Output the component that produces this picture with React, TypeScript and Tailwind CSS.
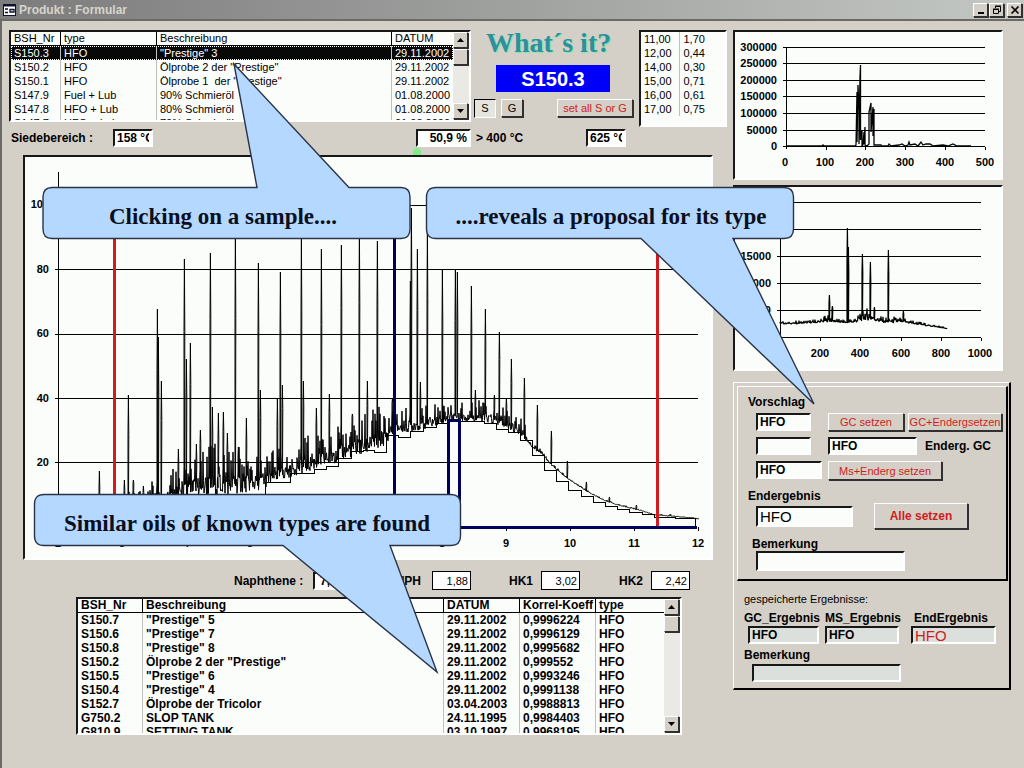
import type { ReactNode } from "react";
import clsx from "clsx";

const SUNKEN = "border-2 border-t-[#181818] border-l-[#181818] border-r-white border-b-white";
const RAISED = "border border-t-white border-l-white border-r-[#303030] border-b-[#303030] shadow-[1px_1px_0_#303030]";
const INK = "#000000";

type Point = [number, number];

const samples = [
  ["S150.3", "HFO", '"Prestige" 3', "29.11.2002"],
  ["S150.2", "HFO", 'Ölprobe 2 der "Prestige"', "29.11.2002"],
  ["S150.1", "HFO", 'Ölprobe 1  der "Prestige"', "29.11.2002"],
  ["S147.9", "Fuel + Lub", "90% Schmieröl", "01.08.2000"],
  ["S147.8", "HFO + Lub", "80% Schmieröl", "01.08.2000"],
  ["S147.7", "HFO + Lub", "70% Schmieröl", "01.08.2000"],
];

const matches = [
  ["S150.7", '"Prestige" 5', "29.11.2002", "0,9996224", "HFO"],
  ["S150.6", '"Prestige" 7', "29.11.2002", "0,9996129", "HFO"],
  ["S150.8", '"Prestige" 8', "29.11.2002", "0,9995682", "HFO"],
  ["S150.2", 'Ölprobe 2 der "Prestige"', "29.11.2002", "0,999552", "HFO"],
  ["S150.5", '"Prestige" 6', "29.11.2002", "0,9993246", "HFO"],
  ["S150.4", '"Prestige" 4', "29.11.2002", "0,9991138", "HFO"],
  ["S152.7", "Ölprobe der Tricolor", "03.04.2003", "0,9988813", "HFO"],
  ["G750.2", "SLOP TANK", "24.11.1995", "0,9984403", "HFO"],
  ["G810.9", "SETTING TANK", "03.10.1997", "0,9968195", "HFO"],
];

const ratios = [
  ["11,00", "1,70"],
  ["12,00", "0,44"],
  ["14,00", "0,30"],
  ["15,00", "0,71"],
  ["16,00", "0,61"],
  ["17,00", "0,75"],
];

// ——— Chromatogram data, in plot pixels ———
// [start of the step, level]
const steps: Point[] = [
  [75, 352], [130, 345], [180, 340], [204, 337], [240, 325], [265, 316], [289, 312], [301, 309],
  [313, 301], [326, 294], [338, 293], [349, 295], [361, 278], [373, 280], [385, 274], [398, 270],
  [411, 266], [422, 263], [435, 264], [459, 266], [471, 272], [483, 275], [495, 283], [507, 298],
  [519, 313], [531, 324], [543, 333], [556, 339], [568, 345], [580, 349], [592, 352], [604, 355],
  [617, 357], [629, 360], [650, 361], [670, 362],
];

const baseline: Point[] = [
  [33, 368], [70, 366], [95, 354], [130, 348], [180, 340], [204, 338], [235, 333], [252, 325],
  [277, 316], [301, 310], [320, 302], [345, 296], [361, 288], [366, 278], [400, 272], [425, 264],
  [459, 265], [480, 271], [498, 280], [508, 292], [516, 297], [527, 309], [540, 320], [556, 331],
  [568, 338], [580, 344], [592, 348], [604, 351], [617, 354], [629, 358], [655, 360], [674, 362],
];

const noise: Point[] = [
  [33, 1], [80, 4], [95, 16], [140, 28], [165, 46], [185, 60], [205, 54], [225, 40], [240, 36],
  [265, 32], [290, 38], [320, 38], [355, 44], [368, 26], [420, 22], [460, 22], [485, 22], [500, 16],
  [508, 8], [520, 4], [540, 2], [674, 1],
];

// [x, top]
const peaks: Point[] = [
  [74, 314], [99, 323], [103, 238], [108, 323], [118, 329], [132, 152], [133, 180], [136, 224],
  [153, 292], [159, 102], [161, 202], [165, 186], [171, 287], [175, 273], [185, 96], [187, 250],
  [193, 256], [198, 255], [202, 276], [210, 72], [213, 290], [221, 261], [233, 106], [235, 233],
  [252, 242], [255, 115], [257, 228], [276, 82], [278, 224], [291, 251], [296, 92], [304, 237],
  [316, 88], [327, 257], [334, 72], [342, 224], [352, 84], [367, 242], [385, 124], [386, 51],
  [392, 92], [395, 225], [402, 74], [417, 112], [430, 113], [432, 115], [446, 129], [450, 233],
  [460, 152], [469, 238], [474, 175], [481, 242], [486, 202], [499, 221], [512, 248], [526, 274],
  [542, 304], [561, 325], [584, 340], [611, 348], [645, 357],
];

function interpolate(points: Point[], x: number) {
  for (let i = 1; i < points.length; i++) {
    const [x0, y0] = points[i - 1];
    const [x1, y1] = points[i];
    if (x <= x1) return y0 + ((y1 - y0) * (x - x0)) / (x1 - x0);
  }
  return points[points.length - 1][1];
}

function rand(n: number) {
  const v = Math.sin(n * 12.9898) * 43758.5453;
  return v - Math.floor(v);
}

// noisy base with a narrow spike at every peak
function tracePath(base: Point[], amp: Point[], tops: Point[]) {
  const start = base[0][0];
  const end = base[base.length - 1][0];
  let d = "";
  for (let i = start * 2; i <= end * 2; i++) {
    const x = i / 2;
    const r = rand(i);
    const y = interpolate(base, x) - (i % 2 === 0 ? r ** 1.6 : r * 0.4) * interpolate(amp, x);
    d += `${d ? "L" : "M"}${x} ${y.toFixed(1)}`;
    const peak = tops.find((p) => p[0] === x);
    if (peak) {
      const shoulder = (peak[1] + (y - peak[1]) * 0.35).toFixed(1);
      d += `V${shoulder}L${x + 0.4} ${peak[1]}L${x + 0.8} ${shoulder}`;
    }
  }
  return d;
}

function stepPath() {
  let d = `M${steps[0][0]} ${steps[0][1]}`;
  for (let i = 1; i < steps.length; i++) {
    d += `H${steps[i][0]}V${steps[i][1]}`;
  }
  return d + "V370";
}

function AxisText({ x, y, end, children }: { x: number; y: number; end?: boolean; children: ReactNode }) {
  return (
    <text x={x} y={y} textAnchor={end ? "end" : "middle"} className="fill-black text-[11px] font-bold">
      {children}
    </text>
  );
}

function Chromatogram() {
  return (
    <svg viewBox="0 0 686 401" className="block h-full w-full" role="img" aria-label="GC chromatogram">
      <g stroke={INK} shapeRendering="crispEdges">
        {[48, 112, 177, 241, 305].map((y) => (
          <line key={y} x1="30" x2="673" y1={y + 0.5} y2={y + 0.5} />
        ))}
        <line x1="33.5" x2="33.5" y1="15" y2="373" />
        {[97, 161, 225, 289, 353, 417, 481, 545, 609, 673].map((x) => (
          <line key={x} x1={x + 0.5} x2={x + 0.5} y1="370" y2="374" />
        ))}
      </g>
      {[100, 80, 60, 40, 20].map((v, i) => (
        <AxisText key={v} x={24} y={[51, 116, 180, 245, 309][i]} end>
          {v}
        </AxisText>
      ))}
      {[2, 3, 4, 5, 6, 7, 8, 9, 10, 11, 12].map((v, i) => (
        <AxisText key={v} x={33 + i * 64} y={390}>
          {v}
        </AxisText>
      ))}
      <path d={stepPath()} fill="none" stroke={INK} shapeRendering="crispEdges" />
      <path d={tracePath(baseline, noise, peaks)} fill="none" stroke={INK} strokeLinejoin="bevel" />
      <g fill="none" stroke="#000058" strokeWidth="3" shapeRendering="crispEdges">
        <path d="M369.5 40V370" />
        <path d="M423.5 370V263.5H434.5V370" />
        <path d="M33 370.5H672" />
      </g>
      <g stroke="#d01c20" strokeWidth="3" shapeRendering="crispEdges">
        <path d="M89.5 48V370" />
        <path d="M632.5 48V369" />
      </g>
    </svg>
  );
}

function AlkaneChart() {
  return (
    <svg viewBox="0 0 266 146" className="block h-full w-full" role="img" aria-label="MS trace 1">
      <g stroke={INK} shapeRendering="crispEdges">
        {[15, 31, 48, 64, 81, 98, 114].map((y) => (
          <line key={y} x1="48" x2="250" y1={y + 0.5} y2={y + 0.5} />
        ))}
        <line x1="51.5" x2="51.5" y1="15" y2="117" />
        {[91, 130, 170, 210, 250].map((x) => (
          <line key={x} x1={x + 0.5} x2={x + 0.5} y1="115" y2="118" />
        ))}
      </g>
      {[300000, 250000, 200000, 150000, 100000, 50000, 0].map((v, i) => (
        <AxisText key={v} x={42} y={[19, 35, 52, 68, 85, 102, 118][i]} end>
          {v}
        </AxisText>
      ))}
      {[0, 100, 200, 300, 400, 500].map((v, i) => (
        <AxisText key={v} x={50 + i * 40} y={134}>
          {v}
        </AxisText>
      ))}
      <path
        d="M51 114H87L88 113L89 114H120L121 113L122 60V110L123 53L124 79V112L125 45L125.500 33V108L127 98V114L128 113L129 100V112L130 95V113L132 114L134 112V80L136 71V100L138 75V104L139 77V113L146 113L147 114H153L154 112L156 114L164 113L167 112L170 114L173 113L174 110L175 113L180 112L183 114L186 110L188 113L191 112L195 112L198 114L208 113L213 114L218 112L222 114H236"
        fill="none"
        stroke={INK}
        strokeWidth="1.3"
      />
    </svg>
  );
}

const msBase: Point[] = [[45, 137], [60, 137], [80, 136], [92, 135], [110, 136], [121, 136], [130, 133], [137, 134], [150, 136], [170, 136], [185, 138], [200, 140], [212, 142]];
const msNoise: Point[] = [[45, 3], [85, 4], [95, 9], [103, 4], [111, 3], [118, 6], [124, 12], [134, 14], [148, 6], [158, 8], [172, 5], [190, 3], [212, 2]];
const msPeaks: Point[] = [[94, 108], [97, 119], [112, 41], [113, 60], [127, 67], [135, 75], [139, 120], [153, 63], [168, 124]];

function MsChart() {
  return (
    <svg viewBox="0 0 266 182" className="block h-full w-full" role="img" aria-label="MS trace 2">
      <g stroke={INK} shapeRendering="crispEdges">
        {[15, 42, 69, 96, 123, 150].map((y) => (
          <line key={y} x1="42" x2="246" y1={y + 0.5} y2={y + 0.5} />
        ))}
        <line x1="45.5" x2="45.5" y1="15" y2="153" />
        {[85, 125, 166, 206, 246].map((x) => (
          <line key={x} x1={x + 0.5} x2={x + 0.5} y1="151" y2="154" />
        ))}
      </g>
      {[15000, 10000, 5000].map((v, i) => (
        <AxisText key={v} x={36} y={73 + i * 27} end>
          {v}
        </AxisText>
      ))}
      {[200, 400, 600, 800, 1000].map((v, i) => (
        <AxisText key={v} x={[85, 125, 166, 206, 245][i]} y={170}>
          {v}
        </AxisText>
      ))}
      <path d={tracePath(msBase, msNoise, msPeaks)} fill="none" stroke={INK} strokeWidth="1.2" strokeLinejoin="bevel" />
    </svg>
  );
}

function ScrollBar() {
  return (
    <div className="flex w-4 shrink-0 flex-col bg-[#ebe9e4]">
      <button type="button" aria-label="Scroll up" className={clsx("flex h-4 w-[15px] items-center justify-center bg-[#d4d0c8]", RAISED)}>
        <svg viewBox="0 0 7 4" className="h-1 w-[7px]"><path d="M3.500 0L7 4H0Z" /></svg>
      </button>
      <div className={clsx("mt-px h-4 w-[15px] bg-[#d4d0c8]", RAISED)} />
      <button type="button" aria-label="Scroll down" className={clsx("mt-auto mb-px flex h-4 w-[15px] items-center justify-center bg-[#d4d0c8]", RAISED)}>
        <svg viewBox="0 0 7 4" className="h-1 w-[7px]"><path d="M0 0H7L3.500 4Z" /></svg>
      </button>
    </div>
  );
}

function ListTable({ heads, widths, rows, selected }: { heads: string[]; widths: string[]; rows: string[][]; selected?: number }) {
  return (
    <table className="w-full table-fixed border-separate border-spacing-0 text-left leading-[14px] whitespace-pre">
      <thead>
        <tr>
          {heads.map((head, i) => (
            <th
              key={head}
              className={clsx("border-b border-black p-0 pl-[3px] leading-[13px] [font-weight:inherit]", widths[i], i < heads.length - 1 && "border-r")}
            >
              {head}
            </th>
          ))}
        </tr>
      </thead>
      <tbody>
        {rows.map((row, r) => (
          <tr
            key={row[0]}
            className={clsx(r === selected && "bg-[#080808] text-white outline-1 -outline-offset-1 outline-dotted outline-white")}
          >
            {row.map((cell, i) => (
              <td
                key={i}
                className={clsx("p-0 pl-[3px]", i < row.length - 1 && "border-r border-[#c0c0c0]")}
              >
                {cell}
              </td>
            ))}
          </tr>
        ))}
      </tbody>
    </table>
  );
}

function Field({ id, label, value, className }: { id: string; label?: string; value: string; className: string }) {
  return (
    <input id={id} aria-label={label} defaultValue={value} className={clsx("min-w-0 shrink-0 px-[2px] outline-none", className)} />
  );
}

function PushButton({ className, children }: { className: string; children: ReactNode }) {
  return (
    <button type="button" className={clsx("shrink-0 bg-[#d4d0c8] whitespace-nowrap", RAISED, className)}>
      {children}
    </button>
  );
}

function Callout({ className, viewBox, path, x, y, children }: { className: string; viewBox: string; path: string; x: number; y: number; children: string }) {
  return (
    <svg viewBox={viewBox} className={clsx("pointer-events-none absolute", className)}>
      <path d={path} fill="#b4d8ff" stroke="#2b3447" strokeWidth="1.4" />
      <text x={x} y={y} textAnchor="middle" className="fill-[#0a0f1e] font-['Liberation_Serif',serif] text-[23px] font-bold">
        {children}
      </text>
    </svg>
  );
}

function TitleBar() {
  return (
    <header className="flex h-[19px] items-center bg-linear-to-r from-[#7c7c7c] to-[#c4c8c4] pr-[2px] pl-[3px]">
      <svg viewBox="0 0 13 12" className="h-3 w-[13px]">
        <rect x="0.5" y="0.5" width="12" height="11" fill="#fff" stroke="#101030" />
        <path d="M1 1.500H12" stroke="#101030" strokeWidth="2" />
        <path d="M2 5H5M2 8.500H5M7 5.500H11V8H7Z" stroke="#101030" strokeWidth="1.3" fill="none" />
      </svg>
      <h1 className="ml-[3px] text-[12px] font-bold text-[#d8d4cc]">Produkt : Formular</h1>
      <div className="ml-auto flex">
        <PushButton className="flex h-[14px] w-[15px] items-center justify-center">
          <svg viewBox="0 0 10 10" className="size-[10px]" aria-label="Minimize"><path d="M2 8H8" stroke="#000" strokeWidth="2" /></svg>
        </PushButton>
        <PushButton className="ml-px flex h-[14px] w-[15px] items-center justify-center">
          <svg viewBox="0 0 10 10" className="size-[10px]" aria-label="Restore">
            <path d="M3.500 3V1.500H8.500V6.500H7M1.500 4.500H6.500V8.500H1.500ZM3 1H9M1 4H7" stroke="#000" fill="none" />
          </svg>
        </PushButton>
        <PushButton className="ml-[3px] flex h-[14px] w-[15px] items-center justify-center">
          <svg viewBox="0 0 10 10" className="size-[10px]" aria-label="Close"><path d="M1.500 1.500L8.500 8.500M8.500 1.500L1.500 8.500" stroke="#000" strokeWidth="1.6" /></svg>
        </PushButton>
      </div>
    </header>
  );
}

function SampleHeader() {
  return (
    <div className="flex h-[97px] items-start">
      <div className={clsx("flex h-[92px] min-w-0 flex-1 overflow-hidden bg-[#fbfdfb]", SUNKEN)}>
        <div className="min-w-0 flex-1">
          <ListTable
            heads={["BSH_Nr", "type", "Beschreibung", "DATUM"]}
            widths={["w-[50px]", "w-24", "", "w-[61px]"]}
            rows={samples}
            selected={0}
          />
        </div>
        <ScrollBar />
      </div>

      <div className="flex w-[168px] shrink-0 flex-col">
        <p className="h-[35px] pl-[15px] font-['Liberation_Serif',serif] text-[28px] leading-[26px] font-bold text-[#2f8f9f] [text-shadow:1px_1px_0_#86e8a8]">
          What´s it?
        </p>
        <div className="ml-[25px] flex h-[27px] w-[114px] items-center justify-center bg-[#0000fa] text-[20px] font-bold text-white">
          S150.3
        </div>
        <div className="mt-[7px] flex pl-[3px]">
          <button type="button" aria-pressed="true" className="h-[19px] w-[22px] border border-t-black border-l-black border-r-white border-b-white bg-[#e6e4df]">
            S
          </button>
          <PushButton className="ml-[5px] h-[18px] w-[22px]">G</PushButton>
          <PushButton className="ml-[34px] h-[18px] w-[76px] text-[#d01c20]">set all S or G</PushButton>
        </div>
      </div>

      <div className={clsx("h-[97px] w-[88px] shrink-0 bg-[#fbfdfb]", SUNKEN)}>
        <table className="border-collapse leading-[14px]">
          <tbody>
            {ratios.map(([mass, ratio]) => (
              <tr key={mass}>
                <td className="w-[38px] border-r border-[#c0c0c0] p-0 pl-[3px]">{mass}</td>
                <td className="p-0 pl-1">{ratio}</td>
              </tr>
            ))}
          </tbody>
        </table>
      </div>
    </div>
  );
}

function BoilingRange() {
  return (
    <div className="relative mt-[2px] flex h-[18px] items-center text-[12px] font-bold">
      <label htmlFor="boil-from" className="w-[104px] shrink-0 pl-[2px]">Siedebereich :</label>
      <Field id="boil-from" value="158 °C" className={clsx("h-[18px] w-[40px] bg-white", SUNKEN)} />
      <div className="ml-auto flex items-center">
        <Field id="boil-share" value="50,9 %" className={clsx("h-[18px] w-[55px] bg-white text-right", SUNKEN)} />
        <label htmlFor="boil-share" className="w-[115px] pl-[5px]">&gt; 400 °C</label>
        <Field id="boil-to" label="Siedeende" value="625 °C" className={clsx("mr-[101px] h-[18px] w-[40px] bg-white", SUNKEN)} />
      </div>
      <span className="absolute right-[306px] -bottom-[8px] h-[7px] w-2 rounded-t-full bg-[#7fee88]" />
    </div>
  );
}

function IndexRow() {
  const box = "h-[19px] w-[39px] border border-black bg-white text-right text-[11px] font-normal";
  return (
    <div className="mt-[11px] flex h-[19px] items-center justify-end pr-[37px] text-[12px] font-bold">
      <label htmlFor="naphthene" className="w-[79px]">Naphthene :</label>
      <Field id="naphthene" value="7,23" className={clsx("h-[18px] w-[54px] bg-white pl-[5px]", SUNKEN)} />
      <label htmlFor="nph" className="w-[65px] pr-[11px] text-right">NPH</label>
      <Field id="nph" value="1,88" className={box} />
      <label htmlFor="hk1" className="w-[70px] pr-2 text-right">HK1</label>
      <Field id="hk1" value="3,02" className={box} />
      <label htmlFor="hk2" className="w-[71px] pr-2 text-right">HK2</label>
      <Field id="hk2" value="2,42" className={box} />
    </div>
  );
}

function ResultPanel() {
  const field = clsx("h-[18px] bg-[#fbfdfb] text-[12px] font-bold", SUNKEN);
  const stored = clsx("h-[18px] bg-[#dce0dc]", SUNKEN);
  return (
    <section className="mt-[11px] h-[308px] border border-r-2 border-b-2 border-t-white border-l-white border-r-black border-b-black pt-[3px] pr-px pl-[3px] text-[12px] leading-[14px] font-bold">
      <div className="h-[195px] border border-r-2 border-b-2 border-t-white border-l-white border-r-black border-b-black pt-2 pl-[10px]">
        <label htmlFor="proposal-gc" className="block">Vorschlag</label>
        <div className="mt-1 flex items-start pl-2">
          <Field id="proposal-gc" value="HFO" className={clsx(field, "w-[55px]")} />
          <PushButton className="ml-[17px] h-[18px] w-[76px] text-[11px] font-normal text-[#d01c20]">GC setzen</PushButton>
          <PushButton className="ml-1 h-[18px] w-[94px] text-[11px] font-normal text-[#d01c20]">GC+Endergsetzen</PushButton>
        </div>
        <div className="mt-[6px] flex items-center pl-2">
          <Field id="proposal-alt" label="Vorschlag 2" value="" className={clsx(field, "w-[55px]")} />
          <Field id="final-gc" value="HFO" className={clsx(field, "ml-[17px] w-[89px]")} />
          <label htmlFor="final-gc" className="ml-2 whitespace-nowrap">Enderg. GC</label>
        </div>
        <div className="mt-[6px] flex items-start pl-2">
          <Field id="proposal-ms" label="Vorschlag MS" value="HFO" className={clsx(field, "w-[66px]")} />
          <PushButton className="ml-[6px] h-[19px] w-[114px] text-[11px] font-normal text-[#d01c20]">Ms+Enderg setzen</PushButton>
        </div>
        <label htmlFor="final" className="mt-[9px] block">Endergebnis</label>
        <div className="flex items-center pl-2">
          <Field id="final" value="HFO" className={clsx("h-[21px] w-[97px] bg-[#fbfdfb] text-[15px] font-normal", SUNKEN)} />
          <PushButton className="ml-[21px] h-[26px] w-[94px] text-[#d01c20]">Alle setzen</PushButton>
        </div>
        <label htmlFor="remark" className="mt-2 block pl-1">Bemerkung</label>
        <Field id="remark" value="" className={clsx("ml-2 block h-[20px] w-[149px] bg-[#fbfdfb]", SUNKEN)} />
      </div>

      <div className="pt-[11px] pl-[7px]">
        <p className="text-[11px] font-normal">gespeicherte Ergebnisse:</p>
        <div className="mt-1 flex items-end">
          <div className="w-[81px]">
            <label htmlFor="stored-gc" className="block h-4 leading-4">GC_Ergebnis</label>
            <Field id="stored-gc" value="HFO" className={clsx(stored, "ml-1 block w-[71px]")} />
          </div>
          <div className="w-[86px]">
            <label htmlFor="stored-ms" className="block h-4 leading-4">MS_Ergebnis</label>
            <Field id="stored-ms" value="HFO" className={clsx(stored, "block w-[74px]")} />
          </div>
          <div>
            <label htmlFor="stored-final" className="block h-4 pl-[3px] leading-4">EndErgebnis</label>
            <Field id="stored-final" value="HFO" className={clsx(stored, "block w-[85px] text-[15px] font-normal text-[#d01c20]")} />
          </div>
        </div>
        <label htmlFor="stored-remark" className="mt-1 block">Bemerkung</label>
        <Field id="stored-remark" value="" className={clsx(stored, "mt-[2px] ml-2 block w-[149px]")} />
      </div>
    </section>
  );
}

export default function App() {
  return (
    <div className="relative flex min-h-screen flex-col overflow-hidden bg-[#d4d0c8] font-['Liberation_Sans',Arial,sans-serif] text-[11px] text-black">
      <TitleBar />
      <main className="flex flex-1 gap-[6px] border-t-2 border-l-2 border-[#6c6a66] pt-[9px] pr-[13px] pl-[7px]">
        <div className="min-w-0 flex-1">
          <SampleHeader />
          <BoilingRange />
          <div className={clsx("mt-2 mr-[14px] ml-[14px] h-[405px] bg-[#fbfdfb]", SUNKEN)}>
            <Chromatogram />
          </div>
          <IndexRow />
          <div className={clsx("mt-[7px] mr-[45px] ml-[67px] flex h-[138px] overflow-hidden bg-[#fbfdfb] text-[12px] font-bold", SUNKEN)}>
            <div className="min-w-0 flex-1">
              <ListTable
                heads={["BSH_Nr", "Beschreibung", "DATUM", "Korrel-Koeff", "type"]}
                widths={["w-[65px]", "", "w-[76px]", "w-[76px]", "w-[68px]"]}
                rows={matches}
              />
            </div>
            <ScrollBar />
          </div>
        </div>

        <aside className="w-[278px] shrink-0">
          <div className={clsx("mr-2 h-[150px] bg-[#fbfdfb]", SUNKEN)}>
            <AlkaneChart />
          </div>
          <div className={clsx("mt-[5px] mr-2 h-[186px] bg-[#fbfdfb]", SUNKEN)}>
            <MsChart />
          </div>
          <ResultPanel />
        </aside>
      </main>

      <Callout
        className="top-[60px] left-[40px] h-[182px] w-[372px]"
        viewBox="0 0 372 182"
        path="M11 127.500H217L194 4L309 127.500H361Q370 127.500 370 137V169Q370 178.500 361 178.500H12Q3 178.500 3 169V137Q3 127.500 12 127.500Z"
        x={183}
        y={164}
      >
        Clicking on a sample....
      </Callout>
      <Callout
        className="top-[185px] left-[424px] h-[222px] w-[394px]"
        viewBox="0 0 394 222"
        path="M12 2.500H360Q369.500 2.500 369.500 12V44Q369.500 53.500 360 53.500H309L390 219L217 53.500H12Q2.500 53.500 2.500 44V12Q2.500 2.500 12 2.500Z"
        x={187}
        y={39}
      >
        ....reveals a proposal for its type
      </Callout>
      <Callout
        className="top-[492px] left-[32px] h-[184px] w-[432px]"
        viewBox="0 0 432 184"
        path="M12 2.500H419Q428.500 2.500 428.500 12V44Q428.500 53.500 419 53.500H358L405 180L251 53.500H12Q2.500 53.500 2.500 44V12Q2.500 2.500 12 2.500Z"
        x={215}
        y={39}
      >
        Similar oils of known types are found
      </Callout>
    </div>
  );
}
